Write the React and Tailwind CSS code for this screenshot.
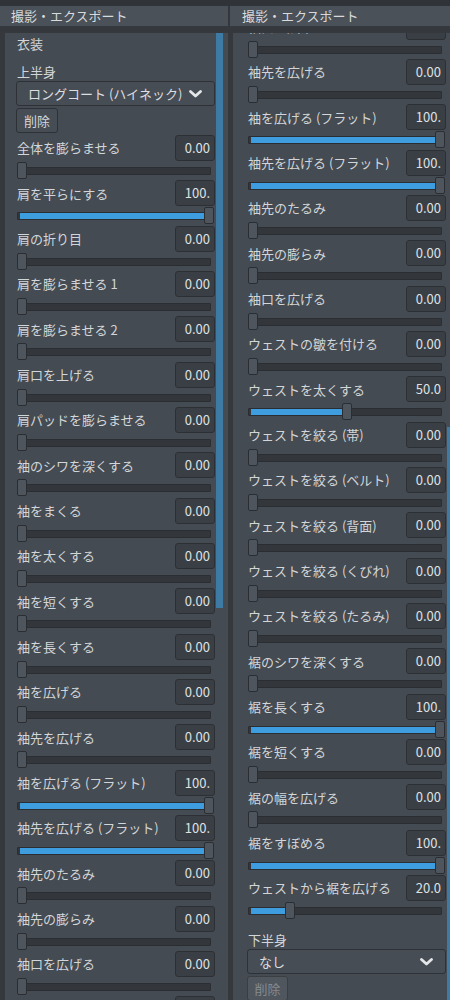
import React from "react";

const leftRows = [
  ["全体を膨らませる", "0.00", 0],
  ["肩を平らにする", "100.", 100],
  ["肩の折り目", "0.00", 0],
  ["肩を膨らませる 1", "0.00", 0],
  ["肩を膨らませる 2", "0.00", 0],
  ["肩口を上げる", "0.00", 0],
  ["肩パッドを膨らませる", "0.00", 0],
  ["袖のシワを深くする", "0.00", 0],
  ["袖をまくる", "0.00", 0],
  ["袖を太くする", "0.00", 0],
  ["袖を短くする", "0.00", 0],
  ["袖を長くする", "0.00", 0],
  ["袖を広げる", "0.00", 0],
  ["袖先を広げる", "0.00", 0],
  ["袖を広げる (フラット)", "100.", 100],
  ["袖先を広げる (フラット)", "100.", 100],
  ["袖先のたるみ", "0.00", 0],
  ["袖先の膨らみ", "0.00", 0],
  ["袖口を広げる", "0.00", 0],
  ["袖口を広げる", "0.00", 0],
];

const rightRows = [
  ["袖口を広げる", "0.00", 0],
  ["袖先を広げる", "0.00", 0],
  ["袖を広げる (フラット)", "100.", 100],
  ["袖先を広げる (フラット)", "100.", 100],
  ["袖先のたるみ", "0.00", 0],
  ["袖先の膨らみ", "0.00", 0],
  ["袖口を広げる", "0.00", 0],
  ["ウェストの皺を付ける", "0.00", 0],
  ["ウェストを太くする", "50.0", 50],
  ["ウェストを絞る (帯)", "0.00", 0],
  ["ウェストを絞る (ベルト)", "0.00", 0],
  ["ウェストを絞る (背面)", "0.00", 0],
  ["ウェストを絞る (くびれ)", "0.00", 0],
  ["ウェストを絞る (たるみ)", "0.00", 0],
  ["裾のシワを深くする", "0.00", 0],
  ["裾を長くする", "100.", 100],
  ["裾を短くする", "0.00", 0],
  ["裾の幅を広げる", "0.00", 0],
  ["裾をすぼめる", "100.", 100],
  ["ウェストから裾を広げる", "20.0", 20],
];

function Chevron() {
  return (
    <svg width="13" height="8" viewBox="0 0 13 8" className="shrink-0">
      <polyline
        points="1.5,1.5 6.5,6 11.5,1.5"
        fill="none"
        stroke="#e4e6e8"
        strokeWidth="2.8"
        strokeLinecap="round"
        strokeLinejoin="round"
      />
    </svg>
  );
}

function Slider({ pct }) {
  return (
    <div className="relative h-[19px] mx-[1px] shrink-0">
      <div className="absolute left-0 right-[3px] top-[6px] h-[8px] bg-[#33373c] border border-[#2a2d31] rounded-[1px]" />
      {pct > 0 && (
        <div
          className="absolute left-[3px] top-[7px] h-[6px] bg-[#3d9ddf]"
          style={{ width: `calc((100% - 10px) * ${pct / 100})` }}
        />
      )}
      <div
        className="absolute top-[1px] w-[10px] h-[17px] bg-[#4f555c] border border-[#2a2d31] rounded-[2px]"
        style={{ left: `calc((100% - 10px) * ${pct / 100})` }}
      />
    </div>
  );
}

function Row({ label, value, pct }) {
  return (
    <div className="h-[45.33px] shrink-0 flex flex-col">
      <div className="flex items-center justify-between h-[26px] shrink-0">
        <span className="pl-[1px] text-[#d3d6d9] whitespace-nowrap">{label}</span>
        <div className="w-[40px] h-[26px] rounded-[3px] bg-[#3a3f45] border border-[#2c3034] text-right pr-[4px] leading-[24px] text-[#dfe1e3] overflow-hidden whitespace-nowrap">
          {value}
        </div>
      </div>
      <Slider pct={pct} />
    </div>
  );
}

function Dropdown({ text }) {
  return (
    <div className="h-[25px] shrink-0 rounded-[3px] bg-[#474d54] border border-[#2e3236] flex items-center justify-between pl-[11px] pr-[12px] text-[#dcdee0]">
      <span className="whitespace-nowrap">{text}</span>
      <Chevron />
    </div>
  );
}

function DeleteButton({ disabled }) {
  return (
    <div
      className={
        disabled
          ? "mt-[2px] shrink-0 w-[41px] h-[25px] rounded-[3px] bg-[#50565d] border border-[#3a3e43] flex items-center justify-center text-[#858a90]"
          : "mt-[2px] shrink-0 w-[42px] h-[25px] rounded-[3px] bg-[#474d54] border border-[#2e3236] flex items-center justify-center text-[#d3d6d9]"
      }
    >
      削除
    </div>
  );
}

export default function App() {
  return (
    <div className="w-[450px] h-[1000px] bg-[#303438] overflow-hidden flex flex-col font-['Noto_Sans_CJK_JP','Noto_Sans',sans-serif] text-[13px]">
      <div className="h-[6px] shrink-0" />
      <div className="flex h-[20px] shrink-0">
        <div className="w-[228px] bg-[#4b5158] pl-[11px] leading-[20px] text-[#d8dadc]">撮影・エクスポート</div>
        <div className="w-[2px] bg-[#34383c]" />
        <div className="flex-1 bg-[#4b5158] pl-[12px] leading-[20px] text-[#d8dadc]">撮影・エクスポート</div>
      </div>
      <div className="h-[7px] shrink-0 bg-[#35393e]" />
      <div className="flex flex-1 min-h-0">
        {/* left panel */}
        <div className="w-[228px] flex bg-[#454b52] overflow-hidden">
          <div className="w-[5px] bg-[#35393e]" />
          <div className="w-[199px] ml-[11px] flex flex-col">
            <div className="h-[22px] shrink-0 leading-[22px] pl-[1px] text-[#d3d6d9]">衣装</div>
            <div className="h-[26px] shrink-0 pt-[8px] leading-[18px] pl-[1px] text-[#d3d6d9]">上半身</div>
            <Dropdown text="ロングコート (ハイネック)" />
            <DeleteButton />
            <div className="h-[2px] shrink-0" />
            {leftRows.map((r, i) => (
              <Row key={i} label={r[0]} value={r[1]} pct={r[2]} />
            ))}
          </div>
          <div className="w-[7px] ml-[1px]">
            <div className="h-[575px] bg-[#3e7ba4]" />
          </div>
        </div>
        <div className="w-[5px] bg-[#35393e]" />
        {/* right panel */}
        <div className="flex-1 flex bg-[#454b52] overflow-hidden">
          <div className="w-[199px] ml-[14px] shrink-0 flex flex-col mt-[-19.33px]">
            {rightRows.map((r, i) => (
              <Row key={i} label={r[0]} value={r[1]} pct={r[2]} />
            ))}
            <div className="h-[29px] shrink-0 pt-[11px] leading-[18px] pl-[1px] text-[#d3d6d9]">下半身</div>
            <Dropdown text="なし" />
            <DeleteButton disabled />
          </div>
          <div className="w-[7px] ml-[1px] shrink-0 flex flex-col">
            <div className="h-[394px] shrink-0" />
            <div className="flex-1 bg-[#3e7ba4]" />
          </div>
        </div>
      </div>
    </div>
  );
}
